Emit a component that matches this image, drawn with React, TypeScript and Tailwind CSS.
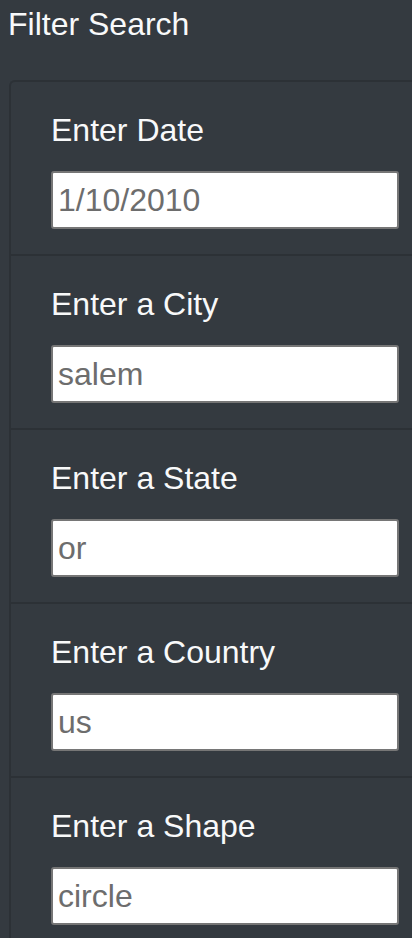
const fields = [
  { label: "Enter Date", value: "1/10/2010" },
  { label: "Enter a City", value: "salem" },
  { label: "Enter a State", value: "or" },
  { label: "Enter a Country", value: "us" },
  { label: "Enter a Shape", value: "circle" },
]

export default function App() {
  return (
    <div className="min-h-[938px] w-[412px] overflow-hidden bg-[#343a40] font-['Liberation_Sans',Arial,sans-serif]">
      <h4 className="pl-[8px] pt-[6px] text-[32px] leading-[37px] text-[#f8f9fa]">Filter Search</h4>

      <div className="ml-[9px] mt-[37px] w-[420px] rounded-tl-[6px] border-l-2 border-t-2 border-[#2c3136]">
        {fields.map((f) => (
          <div key={f.label} className="border-b-2 border-[#2c3136] pl-[40px] pt-[30px] pb-[25px]">
            <label className="block text-[32px] leading-[37px] text-[#f8f9fa]">{f.label}</label>
            <input
              readOnly
              value={f.value}
              className="mt-[22px] block h-[58px] w-[348px] rounded-[3px] border-2 border-[#767676] bg-white px-[5px] text-[32px] text-[#6d6d6d] outline-none"
            />
          </div>
        ))}
      </div>
    </div>
  )
}
